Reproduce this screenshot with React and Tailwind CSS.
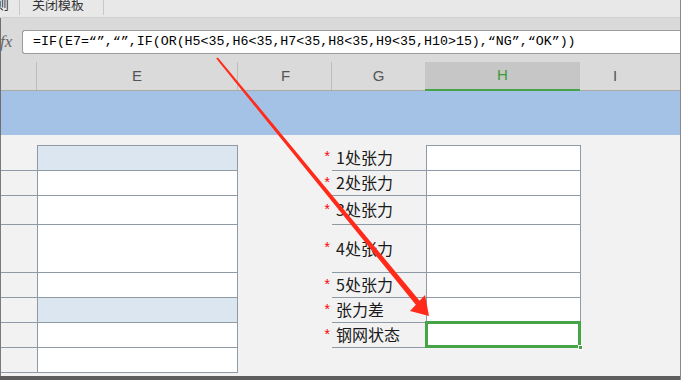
import React from "react";

const B = "border-[#8e9ba7]";

export default function App() {
  const rows = [
    { h: 26, label: "1处张力" },
    { h: 25, label: "2处张力" },
    { h: 29, label: "3处张力" },
    { h: 48, label: "4处张力" },
    { h: 25, label: "5处张力" },
    { h: 25, label: "张力差" },
    { h: 25, label: "钢网状态" },
    { h: 25, label: null },
  ];
  const cjk = { fontFamily: "'Noto Sans CJK SC', 'Noto Sans', sans-serif" };
  return (
    <div
      className="relative w-[681px] h-[380px] overflow-hidden bg-[#f2f2f2] border-r border-[#8a8a8a] flex flex-col"
      style={{ fontFamily: "'Liberation Sans', 'Noto Sans CJK SC', sans-serif" }}
    >
      {/* top bar */}
      <div className="h-[18px] bg-[#e8e8e8] border-b border-[#d0d0d0] flex items-start text-[13px] text-[#333]" style={cjk}>
        <div className="w-[20px] h-[15px] border-r border-[#c8c8c8] overflow-hidden">
          <span className="block -mt-[6px] -ml-[4px] leading-[20px]">则</span>
        </div>
        <div className="w-[84px] h-[15px] border-r border-[#c8c8c8] overflow-hidden">
          <span className="block -mt-[6px] pl-[12px] leading-[20px]">关闭模板</span>
        </div>
      </div>

      {/* formula bar area */}
      <div className="bg-[#dadada] border-l border-[#6e6e6e] flex flex-col">
        <div className="h-[44px] flex items-start pt-[12px]">
          <div className="w-[21px] h-[24px] flex items-center overflow-hidden">
            <span className="-ml-[1px] italic text-[17px] text-[#666]" style={{ fontFamily: "'Liberation Serif', serif" }}>fx</span>
          </div>
          <div className="flex-1 h-[24px] bg-white border border-r-0 border-[#9c9c9c] rounded-l-[3px] flex items-center pl-[10px]">
            <span className="text-[13.3px] text-black whitespace-pre leading-none" style={{ fontFamily: "'Liberation Mono', monospace" }}>
              {'=IF(E7=“”,“”,IF(OR(H5<35,H6<35,H7<35,H8<35,H9<35,H10>15),“NG”,“OK”))'}
            </span>
          </div>
        </div>
        {/* column headers */}
        <div className="h-[29px] flex border-b border-[#a9a9a9] text-[15px] text-[#555]">
          <div className="w-[36px] border-r border-[#bdbdbd]" />
          <div className="w-[201px] border-r border-[#bdbdbd] flex items-center justify-center">E</div>
          <div className="w-[94px] border-r border-[#bdbdbd] flex items-center justify-center pl-[2px]">F</div>
          <div className="w-[93px] flex items-center justify-center">G</div>
          <div className="w-[155px] bg-[#c6c6c6] border-b-2 border-[#45a445] flex items-center justify-center text-[#3a9a3a] -mb-[1px]">H</div>
          <div className="flex-1 flex items-center justify-center pr-[30px]">I</div>
        </div>
      </div>

      {/* blue band */}
      <div className="h-[44px] bg-[#a4c2e5] border-l border-[#6e6e6e]" />

      {/* body */}
      <div className="flex-1 flex flex-col border-l border-[#7a7a7a] pt-[10px]">
        <div
          className="grid"
          style={{
            gridTemplateColumns: "36px 201px 94px 94px 155px 1fr",
            gridTemplateRows: rows.map((r) => r.h + "px").join(" "),
          }}
        >
          {rows.map((r, i) => (
            <React.Fragment key={i}>
              <div className={`border-b ${B}`} />
              <div
                className={`border-l border-r border-b ${B} ${i === 0 ? "border-t" : ""} ${
                  i === 0 || i === 5 ? "bg-[#dce6f1]" : "bg-white"
                }`}
              />
              {r.label ? (
                <div className="flex items-center justify-end pr-[2px]">
                  <span
                    className="text-[14px] leading-none text-[#ff0000] -mt-[4px]"
                    style={{ fontFamily: "'Liberation Sans', sans-serif" }}
                  >
                    *
                  </span>
                </div>
              ) : (
                <div />
              )}
              {r.label ? (
                <div className={`border-b ${B} flex items-center pl-[4px] pb-[2px] text-[16px] text-[#1a1a1a]`} style={cjk}>
                  {r.label}
                </div>
              ) : (
                <div />
              )}
              {r.label ? (
                <div className={`relative bg-white border-l border-r border-b ${B} ${i === 0 ? "border-t" : ""}`}>
                  {i === 6 && (
                    <>
                      <div className="absolute -left-[2px] -top-[2px] -right-[1px] -bottom-[1px] border-[3px] border-[#45a445]" />
                      <div className="absolute -right-[3px] -bottom-[3px] w-[5px] h-[5px] bg-[#45a445] border border-white" />
                    </>
                  )}
                </div>
              ) : (
                <div />
              )}
              <div />
            </React.Fragment>
          ))}
        </div>
        <div className="flex-1" />
      </div>
      <div className="h-[4px] bg-[#5e5e5e]" />

      {/* red arrow annotation */}
      <svg className="absolute left-0 top-0 pointer-events-none" width="681" height="380" viewBox="0 0 681 380">
        <polygon points="216.2,58.6 217.8,57.4 420.2,301.6 416.0,305.0" fill="#ff2a1a" />
        <polygon points="410,311 429,316 425,295" fill="#ff2a1a" />
      </svg>
    </div>
  );
}
